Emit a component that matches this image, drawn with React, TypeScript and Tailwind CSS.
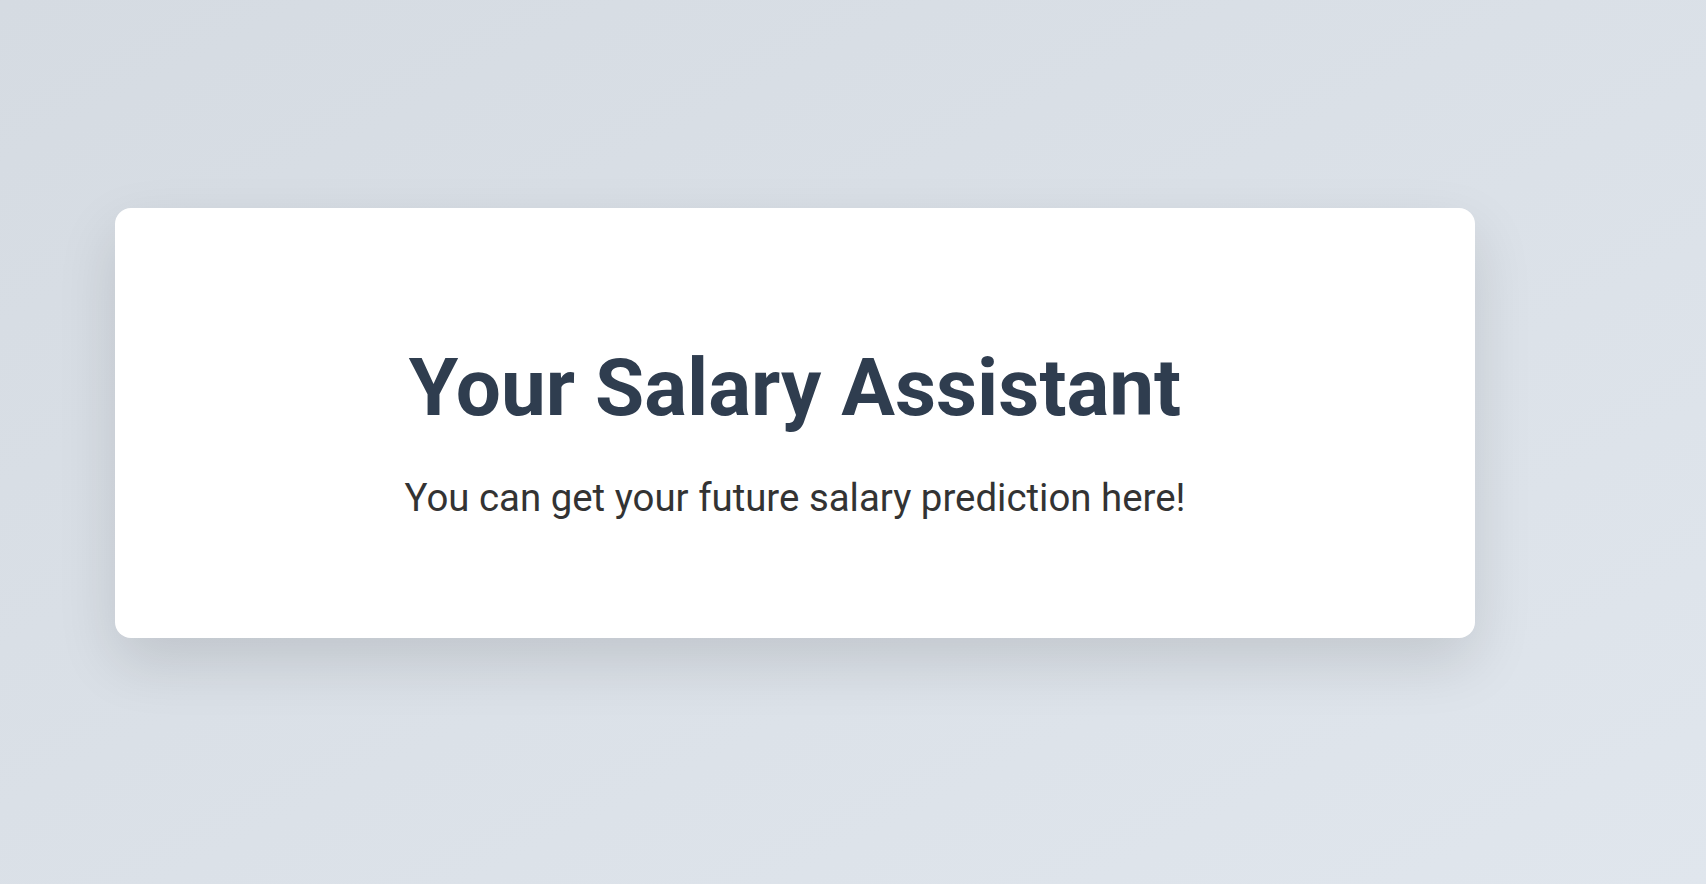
export default function App() {
  return (
    <main className="h-[884px] w-full bg-linear-to-br from-[#d5dbe2] to-[#e0e6ed] pt-[208px] font-['Roboto',sans-serif]">
      {/* Hero card */}
      <section className="ml-[115px] w-[1360px] rounded-2xl bg-white pt-[133px] pb-[119px] text-center shadow-[0_24px_60px_rgba(0,0,0,0.12)]">
        <h1 className="text-[80px] leading-[94px] font-bold text-[#2f3d4f]">
          Your Salary Assistant
        </h1>
        <p className="mt-[42px] text-[38.4px] leading-[42px] text-[#333333]">
          You can get your future salary prediction here!
        </p>
      </section>
    </main>
  );
}
